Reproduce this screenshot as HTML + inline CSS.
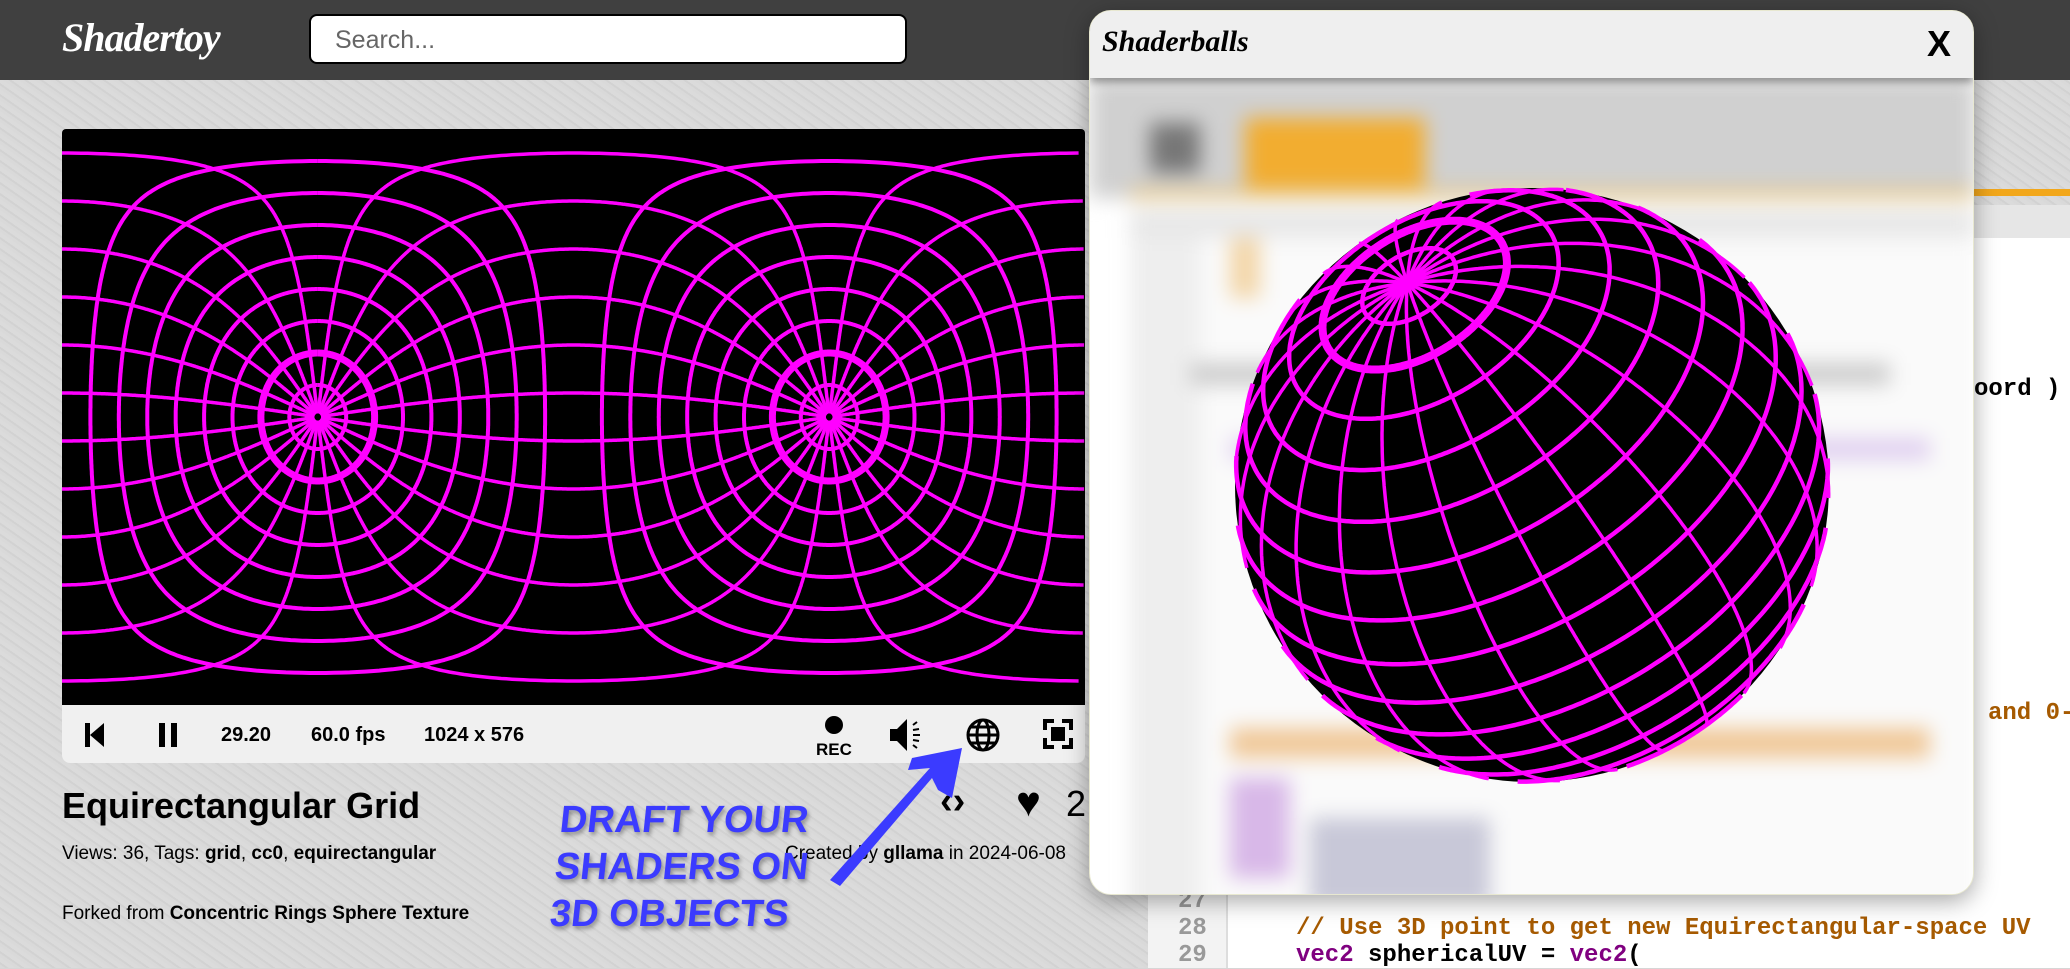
<!DOCTYPE html>
<html><head><meta charset="utf-8"><style>
*{margin:0;padding:0;box-sizing:border-box}
body{width:2070px;height:968px;overflow:hidden;position:relative;background:#d6d6d6;font-family:"Liberation Sans",sans-serif;color:#000}
.bgtex{position:absolute;inset:0;background:repeating-linear-gradient(35deg,#d9d9d9 0 3px,#d2d2d2 3px 5px,#dbdbdb 5px 9px)}
#top{position:absolute;left:0;top:0;width:2070px;height:80px;background:#404040}
#logo{position:absolute;left:62px;top:14px;color:#fff;font:italic bold 40px "Liberation Serif",serif;letter-spacing:-1px}
#search{position:absolute;left:309px;top:14px;width:598px;height:50px;background:#fff;border:2px solid #000;border-radius:8px;font-size:25px;color:#666;padding:10px 24px}
#canvas{position:absolute;left:62px;top:129px;width:1023px;height:576px;background:#000;border-radius:4px 4px 0 0;overflow:hidden}
#ctrl{position:absolute;left:62px;top:705px;width:1023px;height:58px;background:#f0f0f0;border-radius:0 0 8px 8px;font-weight:bold;font-size:20px}
#ctrl span{position:absolute;top:19px}
h1{position:absolute;left:62px;top:785px;font-size:36px;font-weight:bold}
.small{position:absolute;font-size:19px}
#draft{position:absolute;left:555px;top:797px;color:#3b3bff;font:bold 38px "Liberation Sans Narrow","Liberation Sans",sans-serif;line-height:47px;text-shadow:2px 3px 4px rgba(0,0,0,.35);transform:skewX(-6deg)}
#right{position:absolute;left:1148px;top:0;width:922px;height:968px}
.code{position:absolute;font:bold 24px "Liberation Mono","DejaVu Sans Mono",monospace;white-space:pre}
#modal{position:absolute;left:1089px;top:10px;width:885px;height:885px;background:#fff;border-radius:22px;overflow:hidden;box-shadow:0 6px 24px rgba(0,0,0,.35);border:1px solid #e8e8d0}
#mh{position:absolute;left:0;top:0;width:100%;height:67px;background:#efefef;box-shadow:0 4px 8px rgba(0,0,0,.4);z-index:3}
#mh b{position:absolute;left:12px;top:14px;font:italic bold 30px "Liberation Serif",serif}
#mh i{position:absolute;right:22px;top:12px;font:bold 36px "Liberation Sans",sans-serif;font-style:normal}
#blur{position:absolute;inset:67px 0 0 0;filter:blur(10px)}
</style></head><body>
<div class="bgtex"></div>
<div id="top"><div id="logo">Shadertoy</div><div id="search">Search...</div></div>

<div id="right">
  <div style="position:absolute;left:0;top:189px;width:922px;height:7px;background:#f2a71b"></div>
  <div style="position:absolute;left:0;top:205px;width:922px;height:33px;background:#e6e6e6"></div>
  <div style="position:absolute;left:0;top:238px;width:922px;height:730px;background:#fff"></div>
  <div style="position:absolute;left:0;top:238px;width:80px;height:730px;background:#f3f3f3;border-right:2px solid #ddd"></div>
  <div class="code" style="left:826px;top:376px;color:#000">oord )</div>
  <div class="code" style="left:840px;top:700px;color:#a65a00">and 0-1</div>
  <div class="code" style="left:30px;top:888px;color:#999">27</div>
  <div class="code" style="left:30px;top:915px;color:#999">28</div>
  <div class="code" style="left:30px;top:942px;color:#999">29</div>
  <div class="code" style="left:148px;top:915px;color:#a65a00">// Use 3D point to get new Equirectangular-space UV</div>
  <div class="code" style="left:148px;top:942px"><span style="color:#800080">vec2</span> sphericalUV = <span style="color:#800080">vec2</span>(</div>
</div>

<div id="canvas"><svg id="eq" width="1023" height="576"></svg></div>
<div id="ctrl">
  <svg style="position:absolute;left:20px;top:17px" width="26" height="26"><rect x="3" y="1" width="5" height="24"/><path d="M8 13L22 1V25Z"/></svg>
  <svg style="position:absolute;left:95px;top:16px" width="22" height="28"><rect x="2" y="2" width="6" height="24"/><rect x="14" y="2" width="6" height="24"/></svg>
  <span style="left:159px">29.20</span><span style="left:249px">60.0 fps</span><span style="left:362px">1024 x 576</span>
  <svg style="position:absolute;left:750px;top:8px" width="44" height="46"><circle cx="22" cy="12" r="9"/><text x="4" y="42" font-size="17" font-weight="bold" font-family="Liberation Sans">REC</text></svg>
  <svg style="position:absolute;left:826px;top:12px" width="40" height="36"><path d="M2 12h7l10-10v32l-10-10H2z"/><path d="M25 8l4-3M25 13l6-1M25 18h7M25 23l6 1M25 28l4 3" stroke="#000" stroke-width="2"/></svg>
  <svg style="position:absolute;left:903px;top:12px" width="36" height="36" fill="none" stroke="#000" stroke-width="3"><circle cx="18" cy="18" r="15"/><ellipse cx="18" cy="18" rx="6" ry="15"/><path d="M3 18h30M6 10h24M6 26h24"/></svg>
  <svg style="position:absolute;left:980px;top:13px" width="32" height="32"><path d="M1 1h11v4H5v7H1zM20 1h11v11h-4V5h-7zM1 20h4v7h7v4H1zM27 20h4v11H20v-4h7z"/><rect x="9" y="9" width="14" height="14"/></svg>
</div>
<h1>Equirectangular Grid</h1>
<div class="small" style="left:62px;top:843px">Views: 36, Tags: <b>grid</b>, <b>cc0</b>, <b>equirectangular</b></div>
<div class="small" style="left:62px;top:903px">Forked from <b>Concentric Rings Sphere Texture</b></div>
<div class="small" style="left:785px;top:843px">Created by <b>gllama</b> in 2024-06-08</div>
<div style="position:absolute;left:940px;top:780px;font-size:38px;font-weight:bold">‹›</div>
<div style="position:absolute;left:1016px;top:778px;font-size:42px">♥</div>
<div style="position:absolute;left:1066px;top:783px;font-size:36px">2</div>
<div id="draft">DRAFT YOUR<br>SHADERS ON<br>3D OBJECTS</div>
<svg style="position:absolute;left:820px;top:740px" width="150" height="150"><path d="M10 140 L110 28 L88 30 L92 18 L142 8 L132 58 L118 50 L112 38 L20 146Z" fill="#3b3bff"/></svg>

<div id="modal">
  <div id="mh"><b>Shaderballs</b><i>X</i></div>
  <div id="blur">
    <div style="position:absolute;left:0;top:0;width:885px;height:120px;background:#d0d0d0"></div>
    <div style="position:absolute;left:60px;top:45px;width:50px;height:50px;background:#777"></div>
    <div style="position:absolute;left:155px;top:40px;width:180px;height:70px;background:#f2ad30"></div>
    <div style="position:absolute;left:40px;top:112px;width:845px;height:8px;background:#e8c070"></div>
    <div style="position:absolute;left:40px;top:130px;width:845px;height:30px;background:#e8e8e8"></div>
    <div style="position:absolute;left:40px;top:160px;width:845px;height:700px;background:#fafafa"></div>
    <div style="position:absolute;left:40px;top:160px;width:70px;height:700px;background:#eee"></div>
    <div style="position:absolute;left:140px;top:160px;width:30px;height:60px;background:#f3d6a8"></div>
    <div style="position:absolute;left:100px;top:285px;width:700px;height:22px;background:#ccc"></div>
    <div style="position:absolute;left:140px;top:360px;width:700px;height:22px;background:#e0d0f0"></div>
    <div style="position:absolute;left:140px;top:650px;width:700px;height:30px;background:#f0c898"></div>
    <div style="position:absolute;left:140px;top:700px;width:60px;height:100px;background:#d8b8e8"></div>
    <div style="position:absolute;left:220px;top:740px;width:180px;height:90px;background:#c8c8d8"></div>
  </div>
  <svg id="sph" style="position:absolute;left:0;top:0" width="885" height="885"></svg>
</div>

<script>
const NS="http://www.w3.org/2000/svg";
function pl(svg,pts,w){if(pts.length<2)return;const p=document.createElementNS(NS,"polyline");p.setAttribute("points",pts.map(a=>a[0].toFixed(1)+","+a[1].toFixed(1)).join(" "));p.setAttribute("fill","none");p.setAttribute("stroke","#ff00ff");p.setAttribute("stroke-width",w);p.setAttribute("stroke-linejoin","round");svg.appendChild(p);}
function gridPt(th,ph,A,e1,e2){const s=Math.sin(th),c=Math.cos(th);return[A[0]*c+s*(Math.cos(ph)*e1[0]+Math.sin(ph)*e2[0]),A[1]*c+s*(Math.cos(ph)*e1[1]+Math.sin(ph)*e2[1]),A[2]*c+s*(Math.cos(ph)*e1[2]+Math.sin(ph)*e2[2])];}
const D=Math.PI/180;
(function(){const svg=document.getElementById("eq"),W=1023,H=576;const A=[-1,0,0],e1=[0,1,0],e2=[0,0,1];
function proj(p){const lat=Math.asin(Math.max(-1,Math.min(1,p[1])));const lon=Math.atan2(p[0],p[2]);return[(lon/Math.PI+1)/2*W,(0.5-lat/Math.PI)*H];}
function curve(f,n,w){let seg=[],prev=null;for(let i=0;i<=n;i++){const q=proj(f(i/n));if(prev&&Math.abs(q[0]-prev[0])>W/2){pl(svg,seg,w);seg=[];}seg.push(q);prev=q;}pl(svg,seg,w);}
for(let t=10;t<180;t+=10){if(t==90)continue;const w=(t==20||t==160)?7:4;curve(u=>gridPt(t*D,u*2*Math.PI,A,e1,e2),720,w);}
for(let f=7.5;f<360;f+=15){curve(u=>gridPt(0.02+u*(Math.PI-0.04),f*D,A,e1,e2),600,3.5);}
})();
(function(){const svg=document.getElementById("sph");const cx=442,cy=474,R=297;
const c=document.createElementNS(NS,"circle");c.setAttribute("cx",cx);c.setAttribute("cy",cy);c.setAttribute("r",R);c.setAttribute("fill","#000");svg.appendChild(c);
let A=[-0.42,-0.68,0.6];let n=Math.hypot(...A);A=A.map(v=>v/n);
let e1=[-A[2],0,A[0]];n=Math.hypot(...e1);e1=e1.map(v=>v/n);
let e2=[A[1]*e1[2]-A[2]*e1[1],A[2]*e1[0]-A[0]*e1[2],A[0]*e1[1]-A[1]*e1[0]];
function curve(f,N,w){let seg=[];for(let i=0;i<=N;i++){const p=f(i/N);if(p[2]>0.02){seg.push([cx+p[0]*R,cy+p[1]*R]);}else{pl(svg,seg,w);seg=[];}}pl(svg,seg,w);}
for(let t=10;t<180;t+=10){const w=(t==20)?8:4.5;curve(u=>gridPt(t*D,u*2*Math.PI,A,e1,e2),400,w);}
for(let f=7.5;f<360;f+=15){curve(u=>gridPt(u*Math.PI,f*D,A,e1,e2),300,3.5);}
})();
</script>
</body></html>
